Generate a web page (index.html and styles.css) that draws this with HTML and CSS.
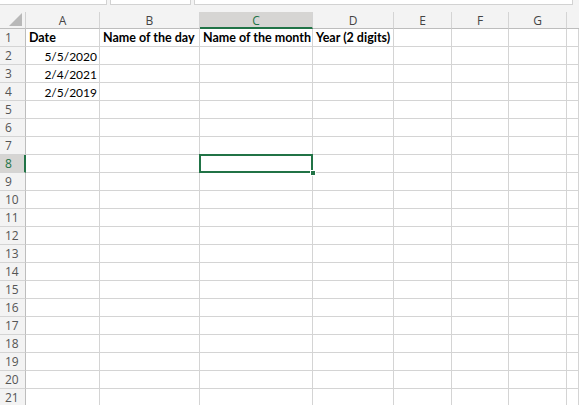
FILE: index.html
```html
<!DOCTYPE html>
<html>
<head>
<meta charset="utf-8">
<link rel="stylesheet" href="styles.css">
</head>
<body>
<div class="app">
  <div class="topbar">
    <div class="box box-name"></div>
    <div class="box box-mid"></div>
    <div class="box box-formula"></div>
  </div>
  <div class="sheet">
    <div class="corner"><span class="tri"></span></div>
    <div class="ch">A</div>
    <div class="ch">B</div>
    <div class="ch ch-sel">C</div>
    <div class="ch">D</div>
    <div class="ch">E</div>
    <div class="ch">F</div>
    <div class="ch">G</div>
    <div class="ch ch-last"></div>

    <div class="rh">1</div><div class="c b">Date</div><div class="c b">Name of the day</div><div class="c b">Name of the month</div><div class="c b over">Year (2 digits)</div><div class="c"></div><div class="c"></div><div class="c"></div><div class="c"></div>
    <div class="rh">2</div><div class="c r">5/5/2020</div><div class="c"></div><div class="c"></div><div class="c"></div><div class="c"></div><div class="c"></div><div class="c"></div><div class="c"></div>
    <div class="rh">3</div><div class="c r">2/4/2021</div><div class="c"></div><div class="c"></div><div class="c"></div><div class="c"></div><div class="c"></div><div class="c"></div><div class="c"></div>
    <div class="rh">4</div><div class="c r">2/5/2019</div><div class="c"></div><div class="c"></div><div class="c"></div><div class="c"></div><div class="c"></div><div class="c"></div><div class="c"></div>
    <div class="rh">5</div><div class="c"></div><div class="c"></div><div class="c"></div><div class="c"></div><div class="c"></div><div class="c"></div><div class="c"></div><div class="c"></div>
    <div class="rh">6</div><div class="c"></div><div class="c"></div><div class="c"></div><div class="c"></div><div class="c"></div><div class="c"></div><div class="c"></div><div class="c"></div>
    <div class="rh">7</div><div class="c"></div><div class="c"></div><div class="c"></div><div class="c"></div><div class="c"></div><div class="c"></div><div class="c"></div><div class="c"></div>
    <div class="rh rh-sel">8</div><div class="c"></div><div class="c"></div><div class="c active"><span class="sel"></span><span class="handle"></span></div><div class="c"></div><div class="c"></div><div class="c"></div><div class="c"></div><div class="c"></div>
    <div class="rh">9</div><div class="c"></div><div class="c"></div><div class="c"></div><div class="c"></div><div class="c"></div><div class="c"></div><div class="c"></div><div class="c"></div>
    <div class="rh">10</div><div class="c"></div><div class="c"></div><div class="c"></div><div class="c"></div><div class="c"></div><div class="c"></div><div class="c"></div><div class="c"></div>
    <div class="rh">11</div><div class="c"></div><div class="c"></div><div class="c"></div><div class="c"></div><div class="c"></div><div class="c"></div><div class="c"></div><div class="c"></div>
    <div class="rh">12</div><div class="c"></div><div class="c"></div><div class="c"></div><div class="c"></div><div class="c"></div><div class="c"></div><div class="c"></div><div class="c"></div>
    <div class="rh">13</div><div class="c"></div><div class="c"></div><div class="c"></div><div class="c"></div><div class="c"></div><div class="c"></div><div class="c"></div><div class="c"></div>
    <div class="rh">14</div><div class="c"></div><div class="c"></div><div class="c"></div><div class="c"></div><div class="c"></div><div class="c"></div><div class="c"></div><div class="c"></div>
    <div class="rh">15</div><div class="c"></div><div class="c"></div><div class="c"></div><div class="c"></div><div class="c"></div><div class="c"></div><div class="c"></div><div class="c"></div>
    <div class="rh">16</div><div class="c"></div><div class="c"></div><div class="c"></div><div class="c"></div><div class="c"></div><div class="c"></div><div class="c"></div><div class="c"></div>
    <div class="rh">17</div><div class="c"></div><div class="c"></div><div class="c"></div><div class="c"></div><div class="c"></div><div class="c"></div><div class="c"></div><div class="c"></div>
    <div class="rh">18</div><div class="c"></div><div class="c"></div><div class="c"></div><div class="c"></div><div class="c"></div><div class="c"></div><div class="c"></div><div class="c"></div>
    <div class="rh">19</div><div class="c"></div><div class="c"></div><div class="c"></div><div class="c"></div><div class="c"></div><div class="c"></div><div class="c"></div><div class="c"></div>
    <div class="rh">20</div><div class="c"></div><div class="c"></div><div class="c"></div><div class="c"></div><div class="c"></div><div class="c"></div><div class="c"></div><div class="c"></div>
    <div class="rh">21</div><div class="c"></div><div class="c"></div><div class="c"></div><div class="c"></div><div class="c"></div><div class="c"></div><div class="c"></div><div class="c"></div>
  </div>
</div>
</body>
</html>
```
FILE: styles.css
```css
* { box-sizing: border-box; }
html, body { margin: 0; padding: 0; background: #ffffff; }
body { width: 579px; height: 405px; overflow: hidden; }

.app { width: 579px; height: 405px; background: #f3f3f3; }

.topbar {
  display: flex;
  height: 5px;
  background: #f3f3f3;
}
.box {
  background: #ffffff;
  border-bottom: 1px solid #d2d2d2;
}
.box-name { width: 107px; border-right: 1px solid #d2d2d2; }
.box-mid { width: 81px; margin-left: 3px; border-left: 1px solid #d2d2d2; border-right: 1px solid #d2d2d2; }
.box-formula { width: 379px; margin-left: 3px; border-left: 1px solid #d2d2d2; border-right: 1px solid #d2d2d2; }

.sheet {
  margin-top: 7px;
  display: grid;
  grid-template-columns: 26px 74px 100px 113px 81px 58px 57px 58px 12px;
  grid-template-rows: 17px repeat(21, 18px);
  font-family: "Lato", "Liberation Sans", sans-serif;
  font-size: 12px;
  color: #000;
}

.corner {
  border-right: 1px solid #d0d0d0;
  border-bottom: 1px solid #bdbdbd;
  position: relative;
  background: #f3f3f3;
}
.tri {
  position: absolute;
  right: 3px;
  bottom: 2px;
  width: 0;
  height: 0;
  border-left: 13px solid transparent;
  border-bottom: 13px solid #b8b8b8;
}

.ch {
  background: #f3f3f3;
  border-right: 1px solid #d4d4d4;
  border-bottom: 1px solid #bdbdbd;
  font-family: "Open Sans", "Noto Sans", sans-serif;
  font-size: 12px;
  color: #444;
  display: flex;
  align-items: center;
  justify-content: center;
  line-height: 1;
  padding-top: 1px;
}
.ch-sel {
  background: #d6d5d3;
  color: #217346;
  border-bottom: 2px solid #217346;
  padding-top: 2px;
}
.ch-last { border-right: none; }

.rh {
  background: #f3f3f3;
  border-right: 1px solid #bdbdbd;
  border-bottom: 1px solid #d4d4d4;
  font-family: "Open Sans", "Noto Sans", sans-serif;
  font-size: 12px;
  color: #555;
  display: flex;
  align-items: center;
  padding-left: 5px;
  line-height: 1;
}
.rh-sel {
  background: #d6d5d3;
  color: #217346;
  border-right: 2px solid #217346;
}

.c {
  background: #ffffff;
  border-right: 1px solid #d4d4d4;
  border-bottom: 1px solid #d4d4d4;
  padding: 0 2px 1px 3px;
  display: flex;
  align-items: flex-end;
  line-height: 1.1;
  white-space: nowrap;
  position: relative;
}
.b { font-weight: bold; font-size: 12.5px; }
.r { justify-content: flex-end; }
.over { overflow: visible; }

.sel {
  position: absolute;
  top: -1px;
  left: -1px;
  right: -1px;
  bottom: -1px;
  border: 2px solid #217346;
  z-index: 2;
}
.handle {
  position: absolute;
  right: -4px;
  bottom: -4px;
  width: 6px;
  height: 6px;
  background: #217346;
  border: 1px solid #fff;
  z-index: 3;
}
```
